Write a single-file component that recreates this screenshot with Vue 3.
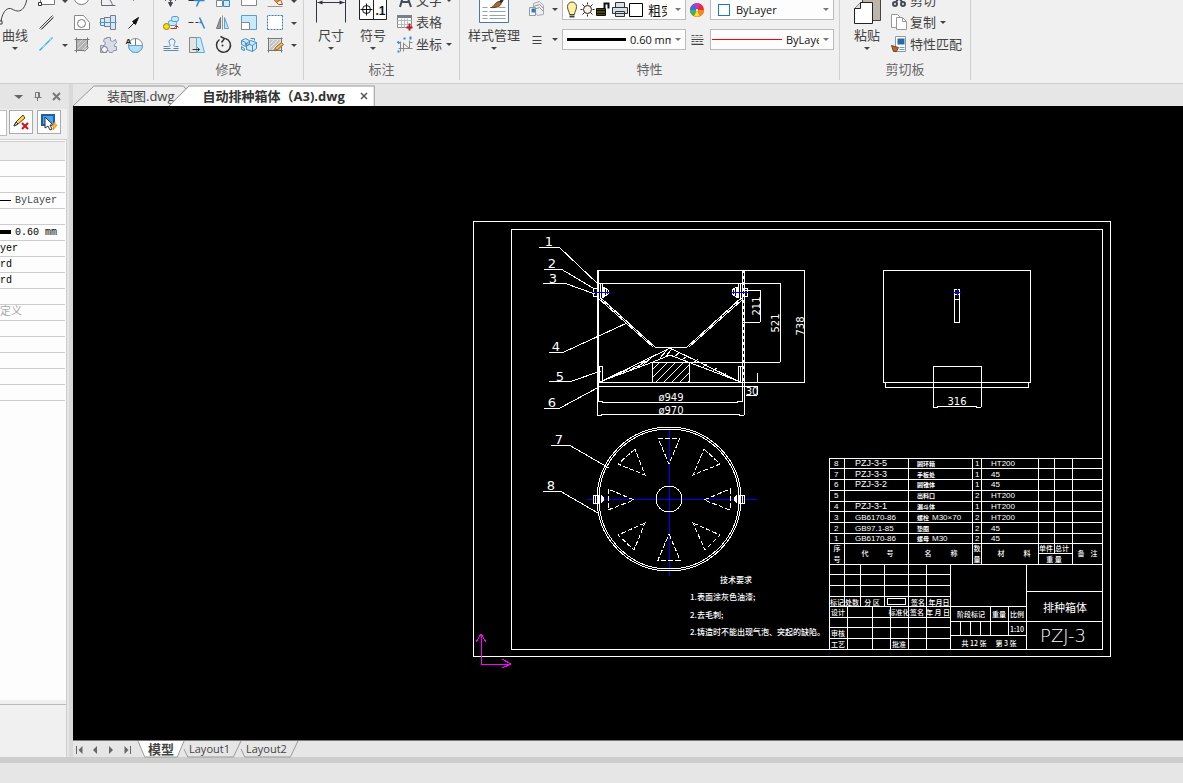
<script setup>
const drawTools = [
  { name: '矩形', art: '<path d="M5 0h14v15H5z" fill="#fff" stroke="#777"/><path d="M3 13h3v3H3z" fill="#fff" stroke="#333"/>' },
  { name: '椭圆', art: '<ellipse cx="11" cy="9" rx="7" ry="6" fill="#fff" stroke="#777"/><path d="M3 7h3v3H3zM17 7h3v3h-3z" fill="#fff" stroke="#555"/>' },
  { name: '角度', art: '<path d="M5 1v15h14M5 10L12 6M8 9c4-1 7 2 8 7" fill="none" stroke="#667"/>' },
  { name: '点', art: '<path d="M11 4v7" stroke="#223"/>' },
  { name: '双线', art: '<path d="M4 17L17 4M6 18L18 6" stroke="#444"/><path d="M5 18L18 5" stroke="#aaa"/>' },
  { name: '孔', art: '<path d="M4 4h9l6 7v7H4z" fill="#fff" stroke="#888"/><circle cx="11" cy="12" r="4" fill="#fff" stroke="#777"/>' },
  { name: '轴', art: '<path d="M4 7h4V6h6V4h5v14h-5v-3H8v-1H4z" fill="#dbe6f2" stroke="#6c7f95"/><path d="M8 6v9M14 6v9" stroke="#6c7f95" fill="none"/><path d="M3 11h17" stroke="#35a0e0"/>' },
  { name: '箭头', art: '<path d="M6 17l7-7" stroke="#222"/><path d="M10 10l6-4-3 7z" fill="#111" stroke="#111"/>' },
  { name: '直线', art: '<path d="M4 17L17 4" stroke="#2eb3e6" stroke-width="1.5"/><path d="M7 14l3-3M14 7l2-2" stroke="#a8dcef"/>' },
  { name: '填充', art: '<path d="M6 6h11v8l-4 3H6z" fill="#b4b4b4"/><path d="M4 6h15M4 17h10M6 4v15M17 4v10M14 18l4-4" stroke="#777" fill="none"/><path d="M7 11l5-5M7 16l9-9M12 16l5-5" stroke="#d5d5d5"/>' },
  { name: '齿轮', art: '<path d="M10 4h4v3l2 1 3-2 1 3-2 2v2h2v4h-3l-1 2h-3l-1-2h-2v2H4v-7h4l1-3-2-1 1-3h2z" fill="#d9dce6" stroke="#8c95a5"/><circle cx="8" cy="16" r="3" fill="#f4f4f4" stroke="#69758a"/>' },
  { name: '局部放大', art: '<circle cx="13" cy="12" r="7" fill="#fff" stroke="#888"/><path d="M13 12h7a7 7 0 0 1-14 0z" fill="#b2def8" stroke="#56a7d6"/><path d="M13 5v7" stroke="#777"/><text x="3" y="10" font-size="8" font-weight="700" font-family="Liberation Sans, sans-serif" fill="#222">A</text>' }
]
const modifyTools = [
  { name: '移动', art: '<path d="M11 2v12M4 9h14M9 13l2 4 2-4zM6 7v4L4 9zM16 7v4l2-2z" fill="#445" stroke="#445"/><circle cx="11" cy="9" r="2" fill="#fff" stroke="#445"/>' },
  { name: '修剪', art: '<path d="M3 11h6" stroke="#333"/><path d="M9 11h10M16 6l-5 11" stroke="#3185cf" stroke-width="1.5"/>' },
  { name: '阵列', art: '<path d="M5 4h6v6H5zM12 11h6v6h-6z" fill="#cdeaf9" stroke="#3c8ac3"/><path d="M5 11h6v6H5zM12 4h6v6h-6z" fill="#fff" stroke="#7b8794"/>' },
  { name: '拉伸', art: '<path d="M4 3h15v13H4z" fill="#fff" stroke="#888"/>' },
  { name: '删除', art: '<path d="M6 5l7 8 4-3-7-8" fill="#f09a22" stroke="#a55b1c"/><path d="M13 13l4-3 2 5h-4z" fill="#fff1c5" stroke="#9f512d"/><path d="M4 17h15" stroke="#999"/>' },
  { name: '复制', art: '<circle cx="7" cy="15" r="3" fill="#ffe100" stroke="#a07800"/><rect x="9" y="9" width="8" height="5" rx="2" fill="#c7e7fb" stroke="#4a9ad6"/><rect x="12" y="5" width="7" height="5" rx="2" fill="#c7e7fb" stroke="#4a9ad6"/><path d="M11 17h6v-3m-2 2l2-2 2 2" fill="none" stroke="#b5352a"/>' },
  { name: '延伸', art: '<path d="M3 11h5m2 0h3" stroke="#333"/><path d="M14 11h3M14 6l5 11" stroke="#3185cf" stroke-width="1.5"/>' },
  { name: '镜像', art: '<path d="M9 6v11H5z" fill="#999" stroke="#777"/><path d="M13 6v11h4z" fill="#bfe6f9" stroke="#5aa5ce"/><path d="M11 4v14" stroke="#999"/>' },
  { name: '缩放', art: '<path d="M4 4h15v14H4z" fill="#c8ebfb" stroke="#5b9ecb"/><path d="M4 11h8v7H4z" fill="#fff" stroke="#888"/>' },
  { name: '分解', art: '<path d="M4 4h15v14H4z" fill="#fff"/><path d="M4 18V4h15M4 18h15V4" fill="none" stroke="#377cae" stroke-dasharray="2 1"/>' },
  { name: '偏移', art: '<path d="M4 13h5c2 0 2-1 1-3a3 3 0 1 1 5 0c-1 2-1 3 1 3h3M4 17h15" fill="none" stroke="#4e91c1"/><path d="M4 15h7m3 0h5" stroke="#777"/>' },
  { name: '倒角', art: '<path d="M4 4h8v15H4z" fill="#e5e5e5" stroke="#888"/><path d="M11 4h4l4 15h-8z" fill="#cbeafa" stroke="#65aace"/><path d="M7 16h7m-2-2l2 2-2 2" stroke="#333" fill="none"/>' },
  { name: '旋转', art: '<path d="M8 6a7 7 0 1 0 6-1M9 3l4 2-3 4" fill="none" stroke="#333" stroke-width="1.5"/><circle cx="11" cy="12" r="1" fill="#333"/>' },
  { name: '合并', art: '<path d="M4 7l4-2 4 2v4l-4 2-4-2zM9 10l4-3 6 2v6l-4 3-6-2zM4 13l3 2v2l-3-1zM13 5h4v2" fill="#cbe9fb" stroke="#468fc4"/><path d="M9 10l6 2v6M15 12l4-3M4 7l4 2v3" fill="none" stroke="#468fc4"/>' },
  { name: '编辑填充', art: '<path d="M6 6h11v11H6z" fill="#c4c4c4"/><path d="M4 5h15M4 17h15M5 4v15M18 4v15" fill="none" stroke="#777"/><path d="M7 10l4-4M7 14l8-8M9 16l8-8" fill="none" stroke="#eee"/><path d="M12 14l6-5 2 2-6 5-3 1z" fill="#f5b84a" stroke="#935f24"/>' }
]
const layerArt = {
  bulb: '<path d="M6 15c0-3-2-4-2-8a4 4 0 0 1 9 0c0 4-2 5-2 8z" fill="#fff1a0" stroke="#554d27"/><path d="M6 17h5" stroke="#444" stroke-width="2"/>',
  sun: '<circle cx="8" cy="10" r="4" fill="#fff3e8" stroke="#222"/><path d="M8 3v2m0 10v2M1 10h2m10 0h2M3 5l2 2m6 6l2 2M13 5l-2 2m-6 6l-2 2" stroke="#222"/>',
  lock: '<path d="M1 9h9v7H1z" fill="#827c00" stroke="#111"/><path d="M9 9V4h4v5M1 11h9M1 14h9" fill="none" stroke="#111" stroke-width="2"/>',
  printer: '<path d="M4 3h9v5H4zM1 8h15v6H1zM4 12h9v5H4z" fill="#d8e1ea" stroke="#333"/>',
  color: '<path d="M2 4h13v13H2z" fill="#fff" stroke="#000"/>'
}
const layerIcons = ['bulb', 'sun', 'lock', 'printer', 'color']

const propertyRows = [
  { text: '' }, { text: '' }, { text: 'ByLayer', mark: 'thin', tone: 'soft' }, { text: '' },
  { text: '0.60 mm', mark: 'thick' }, { text: 'yer' }, { text: 'rd' }, { text: 'rd' }, { text: '' },
  { text: '定义', tone: 'muted' }, { text: '' }, { text: '' }, { text: '' }, { text: '' }, { text: '' }
]

const parts = [
  { no: '8', code: 'PZJ-3-5', name: '圆环箱', qty: '1', stuff: 'HT200', y: 466 },
  { no: '7', code: 'PZJ-3-3', name: '手板处', qty: '1', stuff: '45', y: 477 },
  { no: '6', code: 'PZJ-3-2', name: '圆锥体', qty: '1', stuff: '45', y: 487 },
  { no: '5', code: '', name: '出料口', qty: '2', stuff: 'HT200', y: 498 },
  { no: '4', code: 'PZJ-3-1', name: '漏斗体', qty: '1', stuff: 'HT200', y: 509 },
  { no: '3', code: 'GB6170-86', name: '螺栓', size: 'M30×70', qty: '2', stuff: 'HT200', y: 520 },
  { no: '2', code: 'GB97.1-85', name: '垫圈', qty: '2', stuff: '45', y: 531 },
  { no: '1', code: 'GB6170-86', name: '螺母', size: 'M30', qty: '2', stuff: '45', y: 541 }
]

const leaders = [
  { n: 1, x: 549, y: 246, d: 'M540 248H560L599 285' },
  { n: 2, x: 552, y: 268, d: 'M545 270H562L594 289' },
  { n: 3, x: 553, y: 283, d: 'M544 284H565L596 295' },
  { n: 4, x: 556, y: 351, d: 'M550 353H565L628 324' },
  { n: 5, x: 560, y: 381, d: 'M550 382H573L602 372' },
  { n: 6, x: 552, y: 407, d: 'M545 409H561L600 388' },
  { n: 7, x: 559, y: 444, d: 'M552 446H570L610 469' },
  { n: 8, x: 551, y: 490, d: 'M544 492H561L599 514' }
]
const wedges = [
  '659,439 681,439 670,465', '705,450 721,465 694,476', '731,490 731,511 705,501', '694,524 721,536 706,551',
  '670,535 681,561 659,561', '646,524 619,536 635,551', '609,490 609,511 635,501', '636,450 619,465 646,476'
]
const blockLabels = [
  [837, 551, '序'], [837, 562, '号'], [865, 556, '代'], [890, 556, '号'], [928, 556, '名'], [954, 556, '称'],
  [977, 551, '数'], [977, 562, '量'], [1001, 556, '材'], [1027, 556, '料'], [1046, 551, '单件'], [1062, 551, '总计'],
  [1054, 562, '重 量'], [1081, 556, '备'], [1094, 556, '注'],
  [837, 605, '标记'], [852, 605, '处数'], [872, 605, '分 区'], [918, 605, '签名'], [939, 605, '年月日'],
  [838, 615, '设计'], [899, 615, '标准化'], [917, 615, '签名'], [938, 615, '年 月 日'],
  [838, 636, '审核'], [838, 647, '工艺'], [899, 647, '批准'],
  [971, 617, '阶段标记'], [999, 617, '重量'], [1017, 617, '比例'], [1017, 632, '1:10'],
  [974, 646, '共 12 张'], [1006, 646, '第 3 张']
]
</script>

<template>
  <div class="app">
    <header class="ribbon">
      <section class="group">
        <div class="tools">
          <button class="big curve">
            <svg width="30" height="36"><path d="M1 31C3 20 8 17 12 19c10 6 15-2 16-19" fill="none" stroke="#444" /><path d="M-1 31h3v3h-3z" fill="#fff" stroke="#333" /></svg>
            <span>曲线</span><i class="caret"></i>
          </button>
          <div class="icon-grid draw">
            <template v-for="(t, i) in drawTools" :key="t.name">
              <button :aria-label="t.name"><svg width="22" height="22" viewBox="0.5 0.5 22 22" v-html="t.art"></svg></button>
              <span v-if="i % 4 === 0" class="slot"><i v-if="i !== 4" class="caret"></i></span>
            </template>
          </div>
        </div>
      </section>

      <section class="group modify">
        <div class="tools">
          <div class="icon-grid edit">
            <template v-for="(t, i) in modifyTools" :key="t.name">
              <button :aria-label="t.name"><svg width="22" height="22" viewBox="0.5 0.5 22 22" v-html="t.art"></svg></button>
              <span v-if="i % 5 === 4" class="slot"><i class="caret"></i></span>
            </template>
          </div>
        </div>
        <h2>修改</h2>
      </section>

      <section class="group annotate">
        <div class="tools">
          <button class="big">
            <svg width="42" height="36" viewBox="-0.5 -0.5 42 36"><path d="M6 0v32M35 0v32M7 12h27" stroke="#334" fill="none" /><path d="M7 12l5-2v4zM34 12l-5-2v4z" fill="#334" /></svg>
            <span>尺寸</span><i class="caret"></i>
          </button>
          <button class="big">
            <svg width="42" height="36" viewBox="-0.5 -0.5 42 36"><path d="M7 2h27v27H7zM21 2v27" fill="#fff" stroke="#222" /><circle cx="14" cy="19" r="4" fill="none" stroke="#111" /><path d="M8 19h12M14 13v12" stroke="#111" /><text x="23" y="24" class="decimal">.1</text></svg>
            <span>符号</span><i class="caret"></i>
          </button>
          <div class="stack">
            <button><svg width="22" height="22"><path d="M6 18L10 4h2l5 14M8 13h7" fill="none" stroke="#444c58" stroke-width="2" /></svg><span>文字</span><i class="caret"></i></button>
            <button><svg width="22" height="22" viewBox="0.5 0.5 22 22"><path d="M4 5h14v12H4z" fill="#fff" stroke="#888" /><path d="M4 5h14v2H4z" fill="#75808d" stroke="#75808d" /><path d="M4 10h14M4 14h14M8 8v9M11 8v9M14 8v9" stroke="#bbb" /><path d="M16 13v7M13 17h6" stroke="#b81b1b" stroke-width="2" /></svg><span>表格</span></button>
            <button><svg width="22" height="22" viewBox="0.5 0.5 22 22"><path d="M7 9v10M5 16h14M10 10v9M10 11l6 5V8M16 10h3" fill="none" stroke="#888" /><path d="M10 6h2M16 5h2M17 4v3M4 9l2 2M4 19h2" fill="none" stroke="#2989dd" stroke-width="2" /></svg><span>坐标</span><i class="caret"></i></button>
          </div>
        </div>
        <h2>标注</h2>
      </section>

      <section class="group properties">
        <div class="tools">
          <button class="big style">
            <svg width="68" height="36" viewBox="-0.5 -0.5 68 36"><path d="M19 0h29v32H19z" fill="#fff" stroke="#4d78a6" /><path d="M22 17h5M22 21h5M22 25h5M22 28h5M29 21h16M29 25h16M29 28h16M38 17h7" stroke="#8fa3b8" /><path d="M30 17c4 0 4-6 9-6 4 2 0 7-9 6z" fill="#a8662a" stroke="#66401e" /><path d="M40 12l7-12" stroke="#2d2d2d" stroke-width="3" /></svg>
            <span>样式管理</span><i class="caret"></i>
          </button>
          <div class="property-grid">
            <button aria-label="图层"><svg width="20" height="21" viewBox="0.5 0.5 20 21"><path d="M6 5l6-2 4 4v9l-6 1-4-5z" fill="#eee" stroke="#a3abb4" /><path d="M6 8l6-2 4 4M6 11l6-2 4 4" fill="none" stroke="#8b96a2" /><path d="M2 9h6v8H2z" fill="#f8fbff" stroke="#8c9cac" /><path d="M4 10h4v4H4z" fill="#3978b5" /></svg></button>
            <span class="slot"><i class="caret"></i></span>
            <div class="combo layers">
              <svg v-for="name in layerIcons" :key="name" width="16" height="19" viewBox="0.5 0.5 16 19" v-html="layerArt[name]"></svg>
              <select aria-label="当前图层"><option>粗实线层</option></select><i class="caret pale"></i>
            </div>
            <button aria-label="颜色"><svg width="24" height="21"><circle cx="11" cy="11" r="7" fill="#ed2a2a" /><path d="M11 11L8 5a7 7 0 0 1 6 0z" fill="#c233d6" /><path d="M11 11L8 5a7 7 0 0 0-4 6z" fill="#3c6de5" /><path d="M11 11H4a7 7 0 0 0 4 6z" fill="#30b764" /><path d="M11 11l-3 6a7 7 0 0 0 6 0z" fill="#f5e31f" /><path d="M11 11l3 6a7 7 0 0 0 4-6z" fill="#f58a22" /><circle cx="11" cy="11" r="1" fill="#fff" /></svg></button>
            <div class="combo swatch"><i class="box"></i><select aria-label="颜色值"><option>ByLayer</option></select><i class="caret pale"></i></div>

            <button aria-label="线宽"><svg width="20" height="21" viewBox="0.5 0.5 20 21"><path d="M5 8h9M5 12h9M5 15h9" stroke="#444" /></svg></button>
            <span class="slot"><i class="caret"></i></span>
            <div class="combo"><i class="weight"></i><select aria-label="线宽值"><option>0.60 mm</option></select><i class="caret pale"></i></div>
            <button aria-label="线型"><svg width="24" height="21" viewBox="0.5 0.5 24 21"><path d="M6 7h12M6 13h12" stroke="#555" stroke-dasharray="3 1" /><path d="M6 9h12M6 15h12" stroke="#888" stroke-dasharray="1 1" /><path d="M6 11h12M6 16h12" stroke="#444" /></svg></button>
            <div class="combo"><i class="red"></i><select aria-label="线型值"><option>ByLayer</option></select><i class="caret pale"></i></div>
          </div>
        </div>
        <h2>特性</h2>
      </section>

      <section class="group clipboard">
        <div class="tools">
          <button class="big">
            <svg width="42" height="36" viewBox="-0.5 -0.5 42 36"><path d="M16 2h18v28H16z" fill="#bdb5a8" stroke="#444" /><path d="M14 12h12v21H8V18z" fill="#fff" stroke="#222" /><path d="M14 12v6H8" fill="#ddd" stroke="#222" /></svg>
            <span>粘贴</span><i class="caret"></i>
          </button>
          <div class="stack">
            <button><svg width="22" height="22"><path d="M7 3l7 10M15 3L8 13" stroke="#444b55" stroke-width="2" /><circle cx="7" cy="15" r="2" fill="none" stroke="#444b55" stroke-width="2" /><circle cx="15" cy="15" r="2" fill="none" stroke="#444b55" stroke-width="2" /></svg><span>剪切</span></button>
            <button><svg width="22" height="22" viewBox="0.5 0.5 22 22"><path d="M4 4h6l3 3v10H4z" fill="#fff" stroke="#999" /><path d="M9 7h6l4 4v8H9z" fill="#fff" stroke="#999" /><path d="M15 7v4h4" fill="none" stroke="#999" /></svg><span>复制</span><i class="caret"></i></button>
            <button><svg width="22" height="22" viewBox="0.5 0.5 22 22"><path d="M8 4h10v15H8z" fill="#fff" stroke="#89a" /><path d="M10 6h7v6h-7z" fill="#296aa5" /><path d="M12 15h5M12 17h5" stroke="#6e9dc4" /><path d="M4 13l7 2-2 4H6z" fill="#b46b25" stroke="#74461e" /></svg><span>特性匹配</span></button>
          </div>
        </div>
        <h2>剪切板</h2>
      </section>
    </header>

    <div class="workspace">
      <aside class="palette">
        <div class="palette-head">
          <button aria-label="菜单"><svg width="9" height="9"><path d="M0 3h9L5 7z" fill="#666" /></svg></button>
          <button aria-label="固定"><svg width="9" height="9" viewBox="-0.5 -0.5 9 9"><path d="M2 0h4v5H2zM1 5h7M4 5v4M5 0v5" fill="none" stroke="#777" /></svg></button>
          <button aria-label="关闭"><svg width="9" height="9"><path d="M1 1l7 7M8 1L1 8" stroke="#777" stroke-width="2" /></svg></button>
        </div>
        <div class="palette-tools">
          <span class="field"></span>
          <button aria-label="取消选择"><svg width="22" height="22"><path d="M4 15l2-4 7-7 2 3-7 6z" fill="#ffd447" stroke="#554016" /><path d="M4 15l2-4 2 2z" fill="#fff" stroke="#333" /><path d="M12 12l6 6M18 12l-6 6" stroke="#d1121e" stroke-width="2" /></svg></button>
          <button aria-label="快速选择"><svg width="22" height="22"><path d="M4 4h12v10H4z" fill="#4ba2e8" stroke="#1e5ea6" stroke-width="2" /><path d="M7 6v11l3-2 2 4 2-1-2-4h3z" fill="#fff" stroke="#333" /><path d="M17 11l-3 4h2l-1 4 4-5h-2z" fill="#ffc532" stroke="#e8951b" /></svg></button>
        </div>
        <div class="property-panel">
          <table>
            <tbody>
              <tr class="category"><td></td></tr>
              <tr v-for="(row, i) in propertyRows" :key="i">
                <td :class="row.tone"><i v-if="row.mark" :class="row.mark"></i><span>{{ row.text }}</span></td>
              </tr>
            </tbody>
          </table>
          <div class="description"></div>
        </div>
      </aside>

      <main class="document">
        <nav class="file-tabs">
          <button class="file-tab first">
            <svg class="shape" viewBox="0 0 114 22" preserveAspectRatio="none"><path d="M0 22L21 2h90l3 4v16" fill="#f0f0f0" stroke="#999" /></svg>
            <span>装配图.dwg</span>
          </button>
          <button class="file-tab active">
            <svg class="shape" viewBox="0 0 206 22" preserveAspectRatio="none"><path d="M0 22L20 2h185v20" fill="#fff" stroke="#999" /></svg>
            <span>自动排种箱体（A3).dwg</span>
            <svg class="close" width="8" height="8"><path d="M1 1l6 6M7 1L1 7" stroke="#555" stroke-width="1.5" /></svg>
          </button>
        </nav>

        <div class="canvas">
          <svg viewBox="73 106 1110 634" preserveAspectRatio="xMidYMid meet" aria-label="工程图">
            <defs>
              <pattern id="hatch" width="8" height="8" patternUnits="userSpaceOnUse"><path d="M0 8L8 0M-2 2L2-2M6 10l4-4" stroke="#fff" fill="none" /></pattern>
            </defs>
            <g class="lines" transform="translate(-1 -1)">
              <path d="M474 222H1111V657H474zM512 230H1103V650H512z" />

              <path d="M598 271H806M599 284H781M599 383H806M599 387H759M690 363H781" />
              <path d="M599 271V387" class="heavy" />
              <path d="M743 271V387M745 271V416" />
              <path d="M744 271V383" stroke-dasharray="3 3" />
              <path d="M805 271V383M781 284V363M761 291V323M743 291H761M743 323H761M758 374V383M758 387V396M747 396H758" />
              <path d="M599 387V402H603V403H738V402H743V387M598 387V416H602V415H740V416H745" />
              <path d="M654 348L599 299M656 348H688M688 348L742 299" />
              <path d="M656 348L602 299M690 348L743 301" />
              <path d="M655 347L601 299M689 347L743 299" stroke-dasharray="4 3" />
              <path d="M601 383L671 349L741 383M603 382L654 363L671 356L689 363L739 382" />
              <path d="M641 364l6-2M638 368l9-6M644 366l8-7M661 359l7-8M667 357l6-7M675 358l6-5M683 361l5-4M694 364l5-4M704 368l4-3M714 372l4-3M724 377l3-3M613 378l7-4M618 376l7-4M624 373l7-4M631 371l7-4" />
              <path d="M653 363H690V383H653z" fill="url(#hatch)" />
              <path d="M598 367H603V383M600 367V383M744 367H739V383M741 367V383" />
              <path d="M594 289H599V297H594zM601 284V299M603 284V299M603 288L606 289L609 291V295L606 297L603 299M605 289V298M607 290V297" />
              <path d="M748 289H743V297H748zM741 284V299M739 284V299M739 288L736 289L733 291V295L736 297L739 299M737 289V298M735 290V297" />
              <path d="M604 288V298M738 288V298" class="heavy" />
              <path d="M594 293H612M732 293H749" class="axis" />

              <path d="M884 271H1031V383H884zM886 383V388H1029V383M934 408V367H982V408M934 408H938V407H977V408H982" />
              <circle cx="958" cy="293" r="3" />
              <path d="M955 294V323H960V294M955 300H960" />
              <path d="M954 293H962M958 290V297" class="axis" />

              <path d="M588 500H758M670 428V577" class="axis" />
              <circle cx="670" cy="500" r="72" /><circle cx="670" cy="500" r="70" /><circle cx="670" cy="500" r="13" />
              <polygon v-for="points in wedges" :key="points" :points="points" stroke-dasharray="5 2" />
              <path d="M594 496H599V504H594zM596 496V504M600 495V505M602 496V504M604 498V502M745 496H740V504H745zM743 496V504M739 495V505M737 496V504M735 498V502" />
              <path d="M603 497V503M737 497V503" class="heavy" />
              <path v-for="l in leaders" :key="l.n" :d="l.d" />

              <path d="M830 459H1103M830 469H1103M830 480H1103M830 491H1103M830 502H1103M830 512H1103M830 523H1103M830 534H1103M830 544H1103M830 565H1103" />
              <path d="M830 459V650M845 459V608M909 459V650M973 459V565M982 459V565M1039 459V565M1055 459V554M1073 459V565M1039 554H1073" />
              <path d="M830 575H951M830 586H951M830 597H951M830 607H1027M830 618H951M830 628H951M830 639H951M951 622H1103M951 636H1027M1027 592H1103" />
              <path d="M861 565V608M885 565V608M927 565V650M951 565V650M848 608V650M873 608V650M891 608V650M991 608V636M1009 608V636M1027 565V650M961 622V636M971 622V636M981 622V636M888 599H906V605H888z" />
              <path d="M482 635V665H512M477 643L482 635L487 643M503 660L512 665L503 669" class="ucs" />
            </g>

            <g class="callout"><text v-for="l in leaders" :key="l.n" :x="l.x" :y="l.y">{{ l.n }}</text></g>
            <g class="dimension">
              <text x="671" y="401">ø949</text><text x="671" y="414">ø970</text><text x="957" y="405">316</text><text x="752" y="395">30</text>
              <text transform="translate(760 306) rotate(-90)">211</text>
              <text transform="translate(779 323) rotate(-90)">521</text>
              <text transform="translate(804 326) rotate(-90)">738</text>
            </g>
            <g class="notes">
              <text x="720" y="583">技术要求</text><text x="690" y="600">1.表面涂灰色油漆;</text><text x="690" y="618">2.去毛刺;</text><text x="690" y="635">2.铸造时不能出现气泡、突起的缺陷。</text>
            </g>
            <g v-for="p in parts" :key="p.no" class="parts">
              <text x="834" :y="p.y">{{ p.no }}</text>
              <text x="855" :y="p.y" :class="{ wide: p.code.startsWith('P') }">{{ p.code }}</text>
              <text x="917" :y="p.y" class="name">{{ p.name }}</text>
              <text v-if="p.size" x="932" :y="p.y">{{ p.size }}</text>
              <text x="975" :y="p.y">{{ p.qty }}</text>
              <text x="991" :y="p.y">{{ p.stuff }}</text>
            </g>
            <g class="block"><text v-for="(b, i) in blockLabels" :key="i" :x="b[0]" :y="b[1]">{{ b[2] }}</text></g>
            <text x="1065" y="612" class="title">排种箱体</text>
            <text x="1063" y="642" class="number">PZJ-3</text>
          </svg>
        </div>

        <nav class="layout-tabs">
          <div class="pager">
            <button aria-label="第一个"><svg width="8" height="8" viewBox="-0.5 0 8 8"><path d="M1 0v8" stroke="#666" /><path d="M7 0v8L3 4z" fill="#666" /></svg></button>
            <button aria-label="上一个"><svg width="8" height="8"><path d="M6 0v8L2 4z" fill="#666" /></svg></button>
            <button aria-label="下一个"><svg width="8" height="8"><path d="M2 0v8l4-4z" fill="#666" /></svg></button>
            <button aria-label="最后一个"><svg width="8" height="8" viewBox="-0.5 0 8 8"><path d="M7 0v8" stroke="#666" /><path d="M1 0v8l4-4z" fill="#666" /></svg></button>
          </div>
          <button class="layout-tab model"><svg class="shape" viewBox="0 0 48 16" preserveAspectRatio="none"><path d="M0 0l7 16h34l7-16" fill="#fff" stroke="#999" /></svg><span>模型</span></button>
          <button class="layout-tab"><svg class="shape" viewBox="0 0 60 16" preserveAspectRatio="none"><path d="M0 8l4 8h48l8-16" fill="none" stroke="#999" /></svg><span>Layout1</span></button>
          <button class="layout-tab"><svg class="shape" viewBox="0 0 60 16" preserveAspectRatio="none"><path d="M0 8l4 8h48l8-16" fill="none" stroke="#999" /></svg><span>Layout2</span></button>
        </nav>
      </main>
    </div>
    <footer class="status"></footer>
  </div>
</template>

<style>
body { margin: 0; background: #e6e6e6; overflow: hidden; }
</style>

<style scoped>
.app { display: flex; flex-direction: column; height: 100vh; overflow: hidden; background: #e6e6e6; color: #444; font: 13px/18px "Open Sans", "Noto Sans CJK SC", sans-serif; }
button { display: block; margin: 0; padding: 0; border: 0; background: none; color: inherit; font: inherit; }
svg { display: block; flex: none; }
h2 { margin: 0; padding-top: 3px; font-size: 13px; font-weight: 400; line-height: 21px; text-align: center; color: #666; }
.caret { display: block; flex: none; width: 0; height: 0; border: solid transparent; border-width: 3px 3px 0; border-top-color: #444; }
.caret.pale { border-top-color: #777; }
.slot { display: flex; align-items: center; justify-content: center; }

.ribbon { display: flex; flex: none; margin-top: -10px; padding-bottom: 3px; border-bottom: 1px solid #cfcfcf; background: #f0f0f0; }
.group { box-sizing: border-box; border-right: 1px solid #d0d0d0; width: 154px; }
.modify { width: 150px; padding-left: 6px; }
.annotate { width: 156px; padding-left: 6px; }
.properties { width: 380px; }
.clipboard { width: 131px; padding-left: 6px; }
.modify h2, .annotate h2, .clipboard h2 { margin-left: -6px; }
.tools { display: flex; height: 66px; }
.icon-grid { display: grid; grid-auto-rows: 22px; }
.draw { grid-template-columns: 22px 13px 26px 26px 22px; }
.edit { grid-template-columns: repeat(5, 26px) 8px; }
.big { display: flex; flex-direction: column; align-items: center; width: 42px; white-space: nowrap; }
.big span { margin-bottom: 3px; }
.big.curve { width: 30px; margin-right: 6px; }
.big.style { width: 68px; }
.decimal { font: 700 12px "Liberation Sans", sans-serif; fill: #111; }
.stack { margin-top: -1px; }
.stack button { display: flex; align-items: center; height: 22px; white-space: nowrap; }
.stack .caret { margin-left: 4px; }
.property-grid { display: grid; grid-template-columns: 20px 14px 124px 24px 124px; grid-auto-rows: 21px; row-gap: 9px; padding-top: 9px; }
.combo { box-sizing: border-box; display: flex; align-items: center; overflow: hidden; padding: 0 4px; border: 1px solid #bbb; background: #fdfdfd; }
.combo.layers { padding-left: 1px; }
.combo select { flex: 1; min-width: 0; margin: 0 8px 0 4px; padding: 0; border: 0; appearance: none; background: none; color: #111; font: 11px/18px "Open Sans", "Noto Sans CJK SC", sans-serif; text-overflow: clip; overflow: hidden; }
.combo.layers select { font-size: 13px; }
.combo .box { box-sizing: border-box; flex: none; width: 12px; height: 12px; margin: 0 2px 0 3px; border: 1px solid #1979ca; background: #fff; }
.combo .weight { flex: none; width: 59px; height: 3px; background: #000; }
.combo .red { flex: none; width: 70px; height: 1px; background: #f00; margin-left: -3px; }
.combo .weight + select, .combo .red + select { margin-right: 4px; }

.workspace { display: flex; flex: 1; min-height: 0; }
.palette { display: flex; flex: none; flex-direction: column; box-sizing: border-box; width: 73px; border-right: 4px solid #d9d9d9; background: #e5e5e5; }
.palette-head { display: flex; gap: 10px; align-items: center; justify-content: flex-end; height: 25px; padding-right: 8px; }
.palette-tools { display: flex; gap: 4px; height: 30px; padding-right: 2px; margin-right: 2px; background: #f0f0f0; }
.palette-tools .field { box-sizing: border-box; width: 7px; height: 26px; margin: 1px -2px 0 0; border: 1px solid #bbb; border-left: 0; background: #fff; }
.palette-tools button { box-sizing: border-box; width: 24px; height: 24px; margin-top: 1px; border: 1px solid #aaa; background: #fdfdfd; }
.property-panel { display: flex; flex: 1; flex-direction: column; margin-right: 2px; border: solid #cfcfcf; border-width: 1px 1px 0 0; background: #fdfdfd; }
.property-panel table { width: 65px; border-collapse: collapse; border-top: 1px solid #ccc; margin-top: 1px; font: 10px/15px "Liberation Mono", "Noto Sans CJK SC", monospace; color: #000; }
.property-panel td { box-sizing: border-box; height: 16px; padding: 0; border-bottom: 1px solid #ccc; white-space: nowrap; }
.property-panel td i { display: inline-block; width: 11px; margin-right: 4px; vertical-align: middle; background: #000; }
.property-panel td .thin { height: 1px; }
.property-panel td .thick { height: 4px; }
.property-panel td.soft { color: #444; }
.property-panel td.muted { color: #aaa; font-size: 11px; }
.category td { height: 19px; background: #f0f0f0; }
.description { height: 52px; margin-top: auto; border-top: 1px solid #bbb; background: #f0f0f0; box-shadow: 0 -4px #f0f0f0; }

.document { display: flex; flex: 1; flex-direction: column; min-width: 0; }
.file-tabs { display: flex; flex: none; height: 22px; }
.file-tab, .layout-tab { position: relative; display: flex; align-items: center; white-space: nowrap; }
.shape { position: absolute; inset: 0; width: 100%; height: 100%; overflow: visible; }
.file-tab span, .layout-tab span, .close { position: relative; }
.file-tab { height: 22px; padding: 2px 7px 0 34px; }
.file-tab.first { padding-right: 12px; }
.file-tab.active { margin-left: -18px; font-weight: 700; color: #333; }
.close { margin-left: 15px; }
.canvas { flex: 1; min-height: 0; background: #000; border-bottom: 1px solid #777; }
.canvas svg { width: 100%; height: 100%; }
.layout-tabs { display: flex; flex: none; height: 16px; }
.pager { display: flex; gap: 8px; align-items: center; padding: 2px 7px 0 2px; }
.layout-tab { height: 16px; padding: 0 11px 0 5px; font-size: 11px; }
.layout-tab.model { padding: 0 10px; font-size: 13px; font-weight: 700; }
.status { flex: none; height: 20px; border-top: 6px solid #cdcdcd; }

.lines { fill: none; stroke: #fff; stroke-width: 1; shape-rendering: crispEdges; }
.lines .heavy { stroke-width: 2; }
.lines .axis { stroke: #00f; }
.lines .ucs { stroke: #f0f; }
.canvas text { fill: #fff; font-family: "DejaVu Sans", "Noto Sans CJK SC", sans-serif; }
.canvas .callout text { font-size: 13px; text-anchor: middle; }
.canvas .dimension text { font-size: 10px; text-anchor: middle; }
.canvas .notes text { font: 500 8px "Noto Sans CJK SC", sans-serif; }
.canvas .parts text { font: 8px "Liberation Sans", "Noto Sans CJK SC", sans-serif; }
.canvas .parts .wide { font-size: 9px; }
.canvas .parts .name { font: 700 6px "Noto Sans CJK SC", sans-serif; }
.canvas .block text { font: 500 7px "Noto Sans CJK SC", sans-serif; text-anchor: middle; }
.canvas .title { font: 11px "Noto Sans CJK SC", sans-serif; text-anchor: middle; }
.canvas .number { font-size: 18px; font-weight: 200; text-anchor: middle; }
</style>
